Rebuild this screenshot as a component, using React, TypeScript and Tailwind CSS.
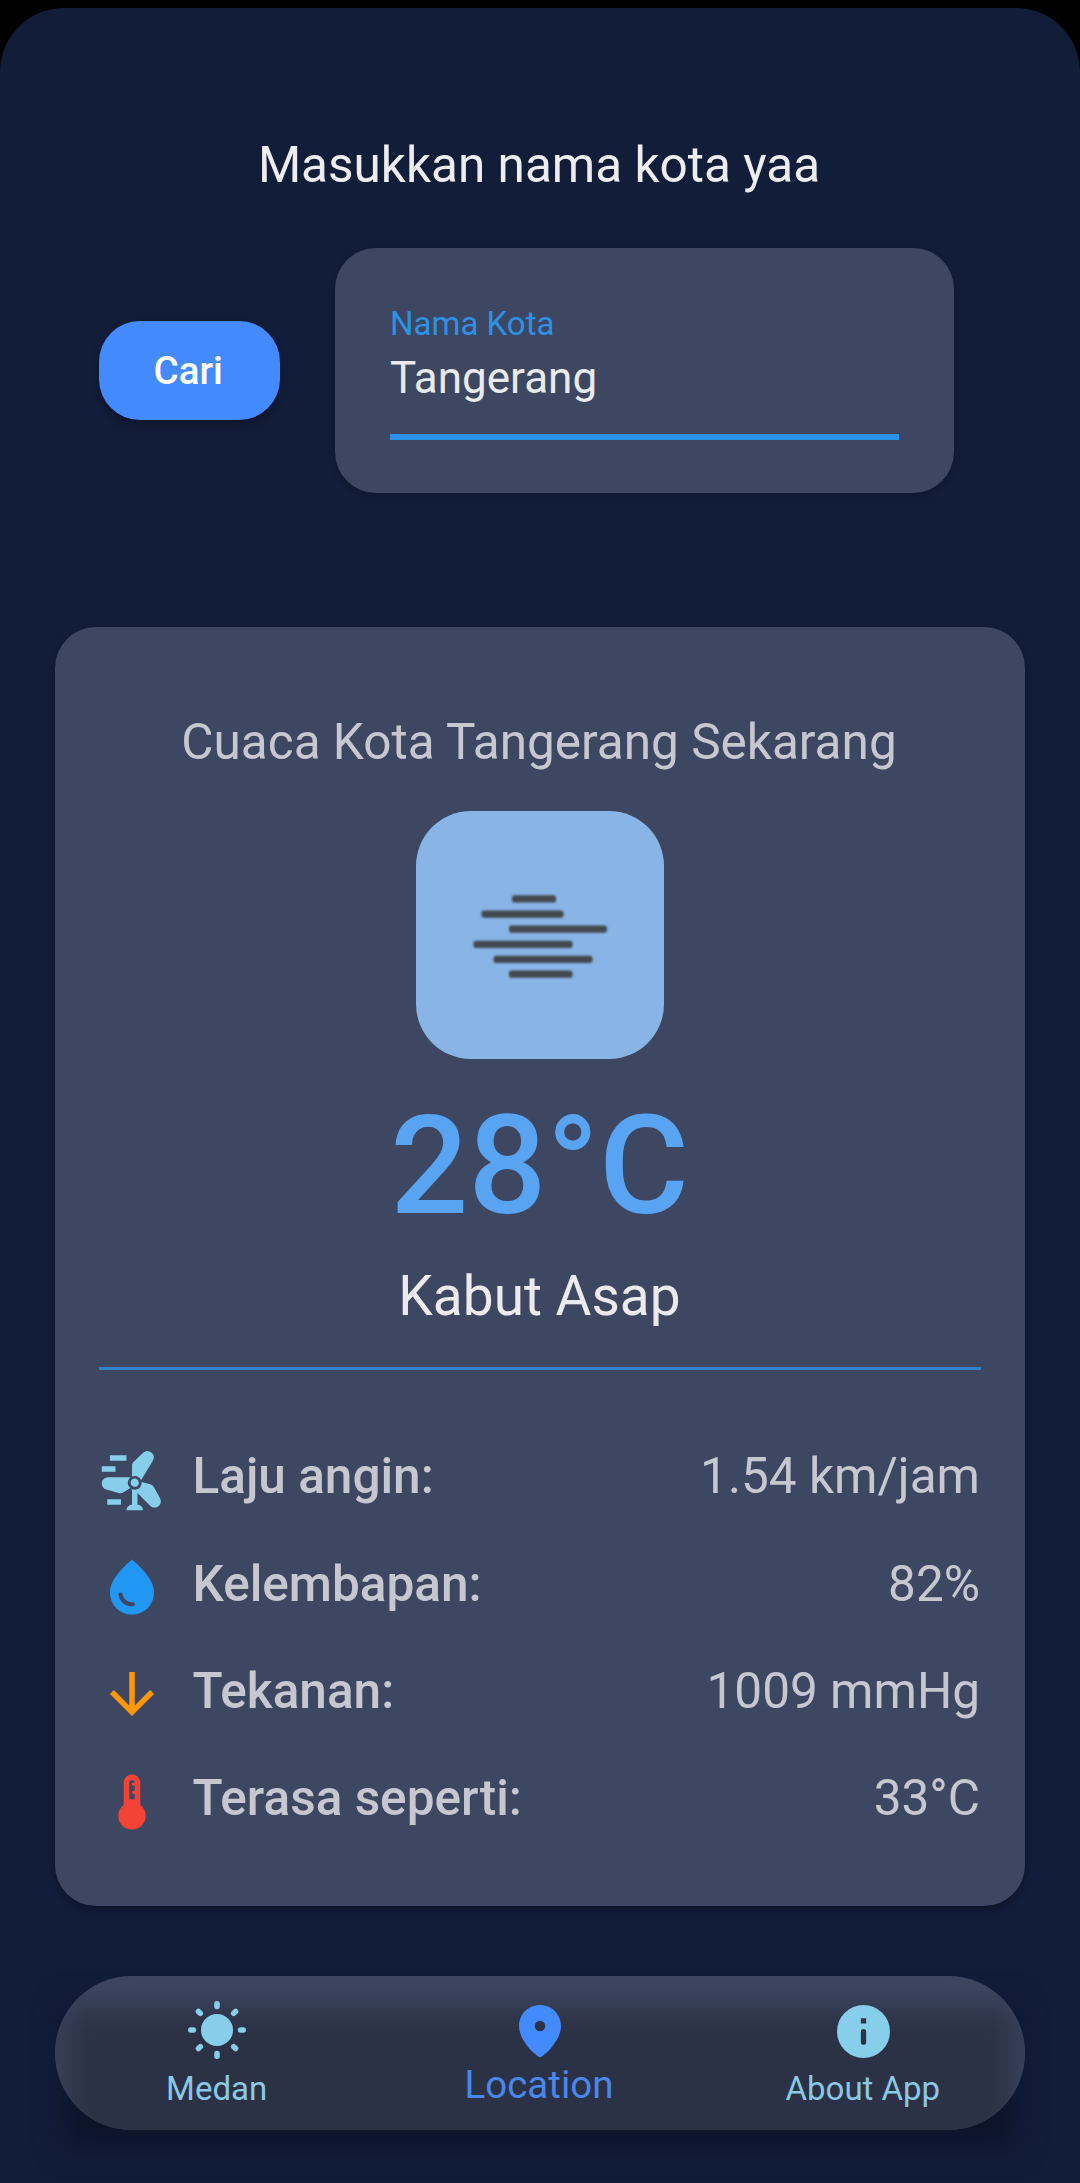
import type { ReactNode } from "react";
import { MdArrowDownward, MdDeviceThermostat, MdWaterDrop, MdWindPower } from "react-icons/md";

function FogIcon() {
  const bars: [number, number, number][] = [
    [96, 84.3, 44],
    [65.5, 99.5, 82],
    [93, 114.5, 98],
    [57.5, 129.8, 99],
    [77.5, 144.7, 99],
    [93, 159.6, 63.5],
  ];
  return (
    <svg className="size-[248px] blur-[0.8px]" viewBox="0 0 248 248" fill="#42484e">
      {bars.map(([x, y, w]) => (
        <rect key={y} x={x} y={y} width={w} height={7.2} rx={2.6} />
      ))}
    </svg>
  );
}

function SunIcon() {
  const angles = [0, 45, 90, 135, 180, 225, 270, 315];
  return (
    <svg className="size-[60px]" viewBox="0 0 60 60" fill="#87ceeb">
      <circle cx="30" cy="30" r="16" />
      {angles.map((a) => (
        <rect key={a} x="27.2" y="1" width="5.6" height="8.2" rx="2.7" transform={`rotate(${a} 30 30)`} />
      ))}
    </svg>
  );
}

function PinIcon() {
  return (
    <svg className="h-[52px] w-[42px]" viewBox="0 0 42 52" fill="#448aff">
      <path
        fillRule="evenodd"
        d="M21 0C9.4 0 0 9.2 0 21c0 8.2 5 16.2 10.4 22.4 3 3.4 6.2 6.2 8.9 8.2a2.7 2.7 0 0 0 3.4 0c2.7-2 5.9-4.8 8.9-8.2C37 37.2 42 29.2 42 21 42 9.2 32.6 0 21 0zm0 15.7a5.3 5.3 0 1 1 0 10.6 5.3 5.3 0 0 1 0-10.6z"
      />
    </svg>
  );
}

function InfoIcon() {
  return (
    <svg className="size-[53px]" viewBox="0 0 53 53" fill="#87ceeb">
      <path
        fillRule="evenodd"
        d="M26.5 0a26.5 26.5 0 1 1 0 53 26.5 26.5 0 0 1 0-53zM23.85 13.25v5.3h5.3v-5.3zM26.5 23.9a2.65 2.65 0 0 0-2.65 2.65v10.6a2.65 2.65 0 0 0 5.3 0v-10.6a2.65 2.65 0 0 0-2.65-2.65z"
      />
    </svg>
  );
}

function Metric({ icon, label, value }: { icon: ReactNode; label: string; value: string }) {
  return (
    <div className="flex h-[107.35px] items-center text-[49.5px] leading-[58px] text-[#c6c8d0]">
      <span className="mt-[7px] mr-[27.5px] text-[66px]">{icon}</span>
      <span className="font-medium">{label}</span>
      <span className="mr-[1px] ml-auto">{value}</span>
    </div>
  );
}

export default function App() {
  return (
    <div className="h-[2183px] w-[1080px] overflow-hidden bg-black pt-2 font-[Roboto,sans-serif]">
      <div className="flex h-[2175px] flex-col rounded-t-[64px] bg-[#121d3a] px-[55px] pt-[128px]">
        <h1 className="pr-[2px] text-center text-[49.5px] leading-[58px] text-[#ecedef]">Masukkan nama kota yaa</h1>

        <div className="mt-[53.5px] flex h-[245px] items-center pl-[43.5px]">
          <button className="flex h-[99px] w-[181.5px] items-center justify-center rounded-[41px] bg-[#448aff] text-[38.5px] leading-[46px] font-medium text-white shadow-[0_5px_8px_rgba(0,0,0,0.25)]">
            <span className="mt-[1px] mr-[2px]">Cari</span>
          </button>
          <div className="ml-[55px] h-[245px] w-[619px] rounded-[41px] bg-[#3d4762] px-[55px] pt-[56px] shadow-[0_3px_6px_rgba(0,0,0,0.22)]">
            <label className="block text-[33px] leading-[40px] text-[#2f91e4]">Nama Kota</label>
            <div className="mt-[8px] h-[88.5px] border-b-[6px] border-[#2b92ea] text-[44px] leading-[52px] text-[#e9eaee]">
              Tangerang
            </div>
          </div>
        </div>

        <section className="mt-[134.5px] flex h-[1278.5px] flex-col items-center rounded-[41px] bg-[#3d4762] px-[44px] pt-[86px] shadow-[0_3px_7px_rgba(0,0,0,0.35)]">
          <h2 className="mr-[2px] text-[49.5px] leading-[58px] text-[#c6c8d0]">Cuaca Kota Tangerang Sekarang</h2>
          <div className="mt-[40px] size-[248px] rounded-[55px] bg-[#89b4e6]">
            <FogIcon />
          </div>
          <p className="mt-[26px] mr-[1px] text-[137.5px] leading-[162px] font-medium text-[#58a4f2]">28°C</p>
          <p className="mt-[17px] mr-[1px] text-[55px] leading-[64px] text-[#ebebee]">Kabut Asap</p>
          <div className="mt-[39px] h-[3px] w-full shrink-0 bg-[#2e83cb]" />
          <div className="mt-[52.5px] w-full">
            <Metric icon={<MdWindPower color="#87ceeb" />} label="Laju angin:" value="1.54 km/jam" />
            <Metric icon={<MdWaterDrop color="#2196f3" />} label="Kelembapan:" value="82%" />
            <Metric icon={<MdArrowDownward color="#ff9800" />} label="Tekanan:" value="1009 mmHg" />
            <Metric icon={<MdDeviceThermostat color="#f44336" />} label="Terasa seperti:" value="33°C" />
          </div>
        </section>

        <div className="relative mt-[70.5px] h-[154px]">
          <div className="absolute top-[28px] right-[8px] -bottom-[18px] left-[8px] bg-[#0d142a] blur-[14px]" />
          <nav className="relative grid h-[154px] grid-cols-3 overflow-hidden rounded-full bg-[#3d4661]">
            <div className="absolute top-[30px] right-[10px] -bottom-[24px] left-[10px] bg-[#2c3246] blur-[14px]" />
            <a className="relative flex flex-col items-center pt-[24px] text-[33px] leading-[40px] text-[#8ac8e4]">
              <SunIcon />
              <span className="mt-[9px]">Medan</span>
            </a>
            <a className="relative flex flex-col items-center pt-[29px] text-[38.5px] leading-[46px] text-[#4a87ec]">
              <PinIcon />
              <span className="mt-[5px] mr-[2px]">Location</span>
            </a>
            <a className="relative flex flex-col items-center pt-[29px] text-[33px] leading-[40px] text-[#8ac8e4]">
              <InfoIcon />
              <span className="mt-[11px] mr-[1px]">About App</span>
            </a>
          </nav>
        </div>
      </div>
    </div>
  );
}
